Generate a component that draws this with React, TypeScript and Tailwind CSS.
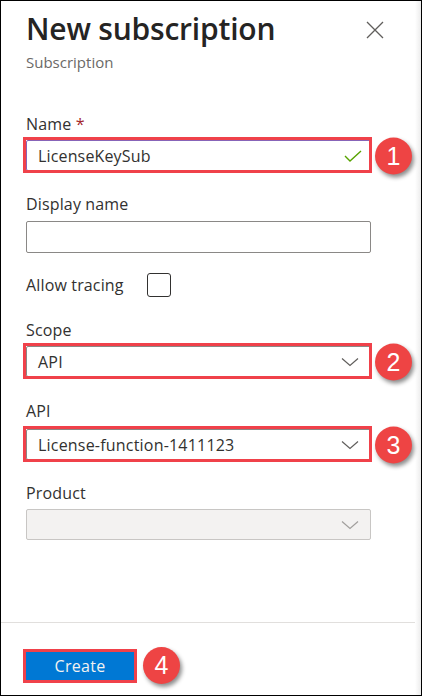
import React from 'react';

const font = { fontFamily: '"Open Sans", "Noto Sans", Arial, sans-serif' };

function Badge({ n }: { n: string }) {
  return (
    <div className="w-[37px] h-[37px] rounded-full bg-[#ee4444] shadow-[2px_3px_4px_rgba(0,0,0,0.45)] flex items-center justify-center">
      <span className="text-white text-[25px] leading-none" style={{ fontFamily: '"Liberation Sans", Arial, sans-serif' }}>{n}</span>
    </div>
  );
}

function Chevron({ color = '#605e5c' }: { color?: string }) {
  return (
    <svg width="18" height="10" viewBox="0 0 18 10" fill="none">
      <path d="M1 1.5 L9 8.5 L17 1.5" stroke={color} strokeWidth="1.2" />
    </svg>
  );
}

function Marked({ children, n }: { children: React.ReactNode; n: string }) {
  return (
    <div className="relative">
      {children}
      <div className="absolute -left-[3px] -top-[3px] -right-[1px] -bottom-[2px] border-[3px] border-[#f0414a] pointer-events-none" />
      <div className="absolute left-[calc(100%+4px)] top-1/2 -translate-y-1/2">
        <Badge n={n} />
      </div>
    </div>
  );
}

function Label({ children, className = '' }: { children: React.ReactNode; className?: string }) {
  return <div className={`text-[16px] leading-[20px] tracking-[0.15px] text-[#323130] ${className}`}>{children}</div>;
}

function Select({ value }: { value: string }) {
  return (
    <div className="h-[31px] border border-[#8a8886] rounded-[2px] bg-white flex items-center justify-between pl-[11px] pr-[11px]">
      <span className="text-[16px] tracking-[0.2px] text-[#323130]">{value}</span>
      <Chevron />
    </div>
  );
}

export default function App() {
  return (
    <div className="w-[422px] h-[696px] border-[1.5px] border-black bg-white flex overflow-hidden" style={font}>
      <div className="flex-1 flex flex-col">
        <div className="pl-[25px] pr-[31px] pt-[8px] flex justify-between items-start">
          <div>
            <h1 className="text-[30px] leading-[40px] font-semibold text-[#252423] tracking-[-0.2px]">New subscription</h1>
            <p className="text-[15px] leading-[20px] text-[#6b6967] mt-[3px]">Subscription</p>
          </div>
          <svg className="mt-[12px]" width="18" height="18" viewBox="0 0 18 18">
            <path d="M1 1 L17 17 M17 1 L1 17" stroke="#605e5c" strokeWidth="1.3" />
          </svg>
        </div>

        <div className="pl-[25px] w-[370px] flex flex-col">
          <Label className="mt-[42px]">
            Name <span className="text-[#a4262c]">*</span>
          </Label>
          <div className="mt-[6px]">
            <Marked n="1">
              <div className="h-[31px] border border-[#8764b8] rounded-[2px] bg-white flex items-center justify-between pl-[11px] pr-[8px]">
                <span className="text-[16px] tracking-[0.15px] text-[#323130]">LicenseKeySub</span>
                <svg width="18" height="12" viewBox="0 0 18 12" fill="none">
                  <path d="M1 6 L6 11 L17 1" stroke="#57a300" strokeWidth="1.4" />
                </svg>
              </div>
            </Marked>
          </div>

          <Label className="mt-[23px]">Display name</Label>
          <div className="mt-[7px] h-[32px] border border-[#8a8886] rounded-[2px] bg-white" />

          <div className="mt-[20px] flex items-center h-[24px]">
            <span className="text-[16px] tracking-[0.15px] text-[#323130] w-[121px]">Allow tracing</span>
            <div className="w-[24px] h-[24px] border-[1.5px] border-[#323130] rounded-[3px]" />
          </div>

          <Label className="mt-[23px]">Scope</Label>
          <div className="mt-[6px]">
            <Marked n="2">
              <Select value="API" />
            </Marked>
          </div>

          <Label className="mt-[24px]">API</Label>
          <div className="mt-[8px]">
            <Marked n="3">
              <Select value="License-function-1411123" />
            </Marked>
          </div>

          <Label className="mt-[23px]">Product</Label>
          <div className="mt-[6px] h-[31px] border border-[#c8c6c4] rounded-[2px] bg-[#f3f2f1] flex items-center justify-end pr-[11px]">
            <Chevron color="#a19f9d" />
          </div>
        </div>

        <div className="flex-1" />
        <div className="h-[1.5px] bg-[#e1dfdd]" />
        <div className="pl-[25px] pt-[24px] pb-[11px] flex items-center">
          <div className="relative">
            <button className="w-[108px] h-[29px] bg-[#0078d4] text-[16px] tracking-[0.3px] text-[#f3f2f1] flex items-center justify-center">
              Create
            </button>
            <div className="absolute -left-[3px] -top-[2px] -right-[3px] -bottom-[3px] border-[3px] border-[#f0414a] pointer-events-none" />
          </div>
          <div className="ml-[9px]">
            <Badge n="4" />
          </div>
        </div>
      </div>
      <div className="w-[6px] bg-gradient-to-r from-white to-[#ececec]" />
    </div>
  );
}
